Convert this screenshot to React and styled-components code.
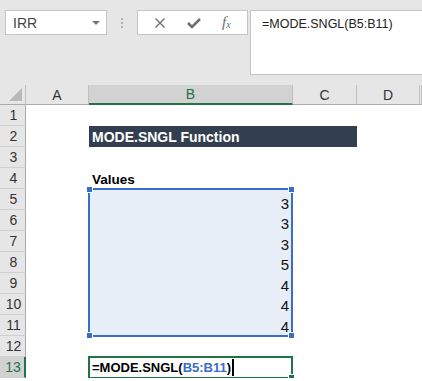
import React from 'react'
import styled, { createGlobalStyle } from 'styled-components';

const GlobalStyle = createGlobalStyle`
    body {
        margin: 0;
        background: #ffffff;
        font-family: "Liberation Sans", Arial, sans-serif;
    }
`;

const Toolbar = styled.div`
    display: flex;
    align-items: flex-start;
    height: 85px;
    box-sizing: border-box;
    padding: 10px 0 0 5px;
    background: #e6e6e6;
`;

const NameBox = styled.div`
    box-sizing: border-box;
    width: 102px;
    height: 25px;
    display: flex;
    align-items: center;
    justify-content: space-between;
    padding: 0 6px 0 7px;
    background: #fff;
    border: 1px solid #c6c6c6;
    font-size: 14px;
    color: #444;
`;

const Caret = styled.span`
    width: 0;
    height: 0;
    border-left: 4px solid transparent;
    border-right: 4px solid transparent;
    border-top: 4px solid #777;
`;

const Grip = styled.div`
    display: flex;
    flex-direction: column;
    gap: 2px;
    margin: 8px 14px 0 14px;

    span {
        width: 2px;
        height: 2px;
        background: #b4b4b4;
    }
`;

const ButtonGroup = styled.div`
    box-sizing: border-box;
    width: 111px;
    height: 25px;
    display: flex;
    align-items: center;
    justify-content: space-around;
    padding: 0 6px;
    background: #fff;
    border: 1px solid #c6c6c6;
`;

const Fx = styled.span`
    font-family: "Liberation Serif", "Times New Roman", serif;
    font-style: italic;
    font-size: 15px;
    color: #6d6d6d;

    sub {
        font-size: 10px;
        vertical-align: -1px;
    }
`;

const FormulaBox = styled.div`
    flex: 1;
    box-sizing: border-box;
    height: 65px;
    margin-left: 2px;
    padding: 6px 0 0 11px;
    background: #fff;
    border: 1px solid #c6c6c6;
    border-right: none;
    font-size: 12.5px;
    color: #222;
`;

const Sheet = styled.div`
    display: grid;
    grid-template-columns: 26px 63px 204px 64px 63px 1fr;
    grid-template-rows: 20px repeat(13, 21px);
    background: #fff;
`;

const Corner = styled.div`
    box-sizing: border-box;
    background: #e6e6e6;
    border-right: 1px solid #c0c0c0;
    border-bottom: 1px solid #ababab;
    position: relative;

    &::after {
        content: '';
        position: absolute;
        right: 3px;
        bottom: 3px;
        width: 0;
        height: 0;
        border-left: 13px solid transparent;
        border-bottom: 13px solid #b9b9b9;
    }
`;

const ColHead = styled.div`
    box-sizing: border-box;
    display: flex;
    align-items: center;
    justify-content: center;
    font-size: 14px;
    background: ${p => (p.$active ? '#d2d2d2' : '#e6e6e6')};
    color: ${p => (p.$active ? '#217346' : '#333')};
    border-right: 1px solid #c0c0c0;
    border-bottom: ${p => (p.$active ? '2px solid #217346' : '1px solid #ababab')};
`;

const RowHead = styled.div`
    box-sizing: border-box;
    grid-column: 1;
    display: flex;
    align-items: center;
    justify-content: center;
    padding-left: 2px;
    font-size: 14px;
    background: ${p => (p.$active ? '#d2d2d2' : '#e6e6e6')};
    color: ${p => (p.$active ? '#217346' : '#333')};
    border-bottom: 1px solid #d0d0d0;
    border-right: ${p => (p.$active ? '2px solid #217346' : '1px solid #ababab')};
`;

const Title = styled.div`
    grid-column: 3 / 5;
    grid-row: 3;
    display: flex;
    align-items: center;
    padding-left: 3px;
    background: #333f4f;
    color: #fff;
    font-weight: bold;
    font-size: 14px;
`;

const Label = styled.div`
    grid-column: 3;
    grid-row: 5;
    display: flex;
    align-items: flex-end;
    padding: 0 0 2px 3px;
    font-weight: bold;
    font-size: 13.5px;
    color: #000;
`;

const Selection = styled.div`
    grid-column: 3;
    grid-row: 6 / 13;
    position: relative;
    margin: -1px 0 -1px -1px;
    border: 2px solid #3a6dc8;
    background: #e8eef8;
    display: flex;
    flex-direction: column;
    padding-top: 1px;
`;

const Value = styled.div`
    height: 21px;
    display: flex;
    align-items: flex-end;
    justify-content: flex-end;
    padding-right: 2px;
    font-size: 15px;
    color: #111;
`;

const Handle = styled.span`
    position: absolute;
    width: 5px;
    height: 5px;
    background: ${p => p.$color};
    border: 1px solid #fff;
    ${p => (p.$top ? 'top: -4px;' : 'bottom: -4px;')}
    ${p => (p.$left ? 'left: -4px;' : 'right: -4px;')}
`;

const ActiveCell = styled.div`
    grid-column: 3;
    grid-row: 14;
    position: relative;
    margin: -1px 0 -1px -1px;
    border: 2px solid #217346;
    display: flex;
    align-items: center;
    padding-left: 2px;
    font-weight: bold;
    font-size: 13px;
    color: #000;
`;

const Ref = styled.span`
    color: #3a6dc8;
`;

const Cursor = styled.span`
    width: 2px;
    height: 17px;
    margin-left: 1px;
    background: #000;
`;

const rows = Array.from({ length: 13 }, (_, i) => i + 1);
const values = [3, 3, 3, 5, 4, 4, 4];

function CancelIcon() {
    return (
        <svg width="12" height="12" viewBox="0 0 12 12">
            <path d="M1.5 1.5 L10.5 10.5 M10.5 1.5 L1.5 10.5" stroke="#6d6d6d" strokeWidth="1.4" fill="none" />
        </svg>
    );
}

function EnterIcon() {
    return (
        <svg width="14" height="12" viewBox="0 0 14 12">
            <path d="M1 6 L5 10 L13 2" stroke="#6d6d6d" strokeWidth="2.6" fill="none" />
        </svg>
    );
}

export default function App() {
    return (
        <div>
            <GlobalStyle />
            <Toolbar>
                <NameBox>IRR<Caret /></NameBox>
                <Grip><span /><span /><span /></Grip>
                <ButtonGroup>
                    <CancelIcon />
                    <EnterIcon />
                    <Fx>f<sub>x</sub></Fx>
                </ButtonGroup>
                <FormulaBox>=MODE.SNGL(B5:B11)</FormulaBox>
            </Toolbar>
            <Sheet>
                <Corner />
                <ColHead>A</ColHead>
                <ColHead $active>B</ColHead>
                <ColHead>C</ColHead>
                <ColHead>D</ColHead>
                <ColHead />
                {rows.map(r => (
                    <RowHead key={r} $active={r === 13} style={{ gridRow: r + 1 }}>{r}</RowHead>
                ))}
                <Title>MODE.SNGL Function</Title>
                <Label>Values</Label>
                <Selection>
                    {values.map((v, i) => <Value key={i}>{v}</Value>)}
                    <Handle $color="#3a6dc8" $top $left />
                    <Handle $color="#3a6dc8" $top />
                    <Handle $color="#3a6dc8" $left />
                    <Handle $color="#3a6dc8" />
                </Selection>
                <ActiveCell>
                    =MODE.SNGL(<Ref>B5:B11</Ref>)<Cursor />
                    <Handle $color="#217346" />
                </ActiveCell>
            </Sheet>
        </div>
    )
}
